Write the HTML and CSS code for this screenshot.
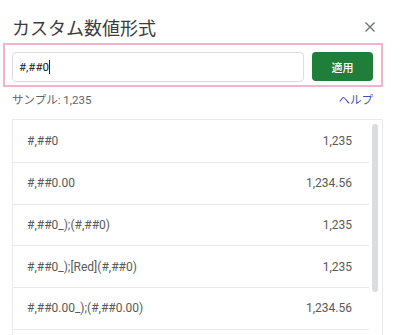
FILE: index.html
```html
<!DOCTYPE html>
<html lang="ja">
<head>
<meta charset="utf-8">
<link rel="stylesheet" href="styles.css">
</head>
<body>
<div class="dialog">
  <div class="header">
    <div class="title">カスタム数値形式</div>
    <svg class="close" width="10" height="10" viewBox="0 0 10 10"><path d="M0.5 0.5L9.5 9.5M9.5 0.5L0.5 9.5" stroke="#6b6f73" stroke-width="1.3" fill="none"/></svg>
  </div>
  <div class="highlight">
    <div class="entry">
      <div class="input"><span class="val">#,##0</span><span class="caret"></span></div>
      <div class="apply">適用</div>
    </div>
  </div>
  <div class="sample">
    <span>サンプル: 1,235</span>
    <span class="help">ヘルプ</span>
  </div>
  <div class="list">
    <div class="rows">
      <div class="row"><span>#,##0</span><span>1,235</span></div>
      <div class="row"><span>#,##0.00</span><span>1,234.56</span></div>
      <div class="row"><span>#,##0_);(#,##0)</span><span>1,235</span></div>
      <div class="row"><span>#,##0_);[Red](#,##0)</span><span>1,235</span></div>
      <div class="row"><span>#,##0.00_);(#,##0.00)</span><span>1,234.56</span></div>
      <div class="row"></div>
    </div>
    <div class="track"><div class="thumb"></div></div>
  </div>
</div>
</body>
</html>
```

FILE: styles.css
```css
html, body {
  margin: 0;
  padding: 0;
  background: #ffffff;
}
body {
  width: 400px;
  height: 335px;
  overflow: hidden;
  font-family: Roboto, "Noto Sans CJK JP", sans-serif;
}
.dialog {
  display: flex;
  flex-direction: column;
}
.header {
  display: flex;
  justify-content: space-between;
  align-items: center;
  padding: 14px 25px 0 12px;
  height: 26px;
}
.title {
  font-family: "Noto Sans CJK JP", sans-serif;
  font-size: 18px;
  line-height: 26px;
  color: #3c3c3c;
}
.close {
  display: block;
}
.highlight {
  margin: 3px 0 0 3px;
  width: 361px;
  border: 2px solid #f2b3cc;
  padding: 7px 8px 3px 7px;
}
.entry {
  display: flex;
  gap: 8px;
  height: 30px;
}
.input {
  flex: 1;
  border: 1px solid #dadce0;
  border-radius: 4px;
  display: flex;
  align-items: center;
  padding-left: 6px;
  font-size: 11.5px;
  color: #202124;
}
.caret {
  display: inline-block;
  width: 1px;
  height: 14px;
  background: #202124;
  margin-left: 0.5px;
}
.apply {
  width: 61px;
  height: 29px;
  background: #1e7e3a;
  border-radius: 4px;
  color: #ffffff;
  font-family: "Noto Sans CJK JP", sans-serif;
  font-size: 11px;
  font-weight: 500;
  display: flex;
  align-items: center;
  justify-content: center;
}
.sample {
  display: flex;
  justify-content: space-between;
  margin-top: 3px;
  padding: 0 27px 0 12px;
  height: 20px;
  line-height: 20px;
  font-size: 11.5px;
  color: #5f6368;
}
.help {
  color: #3f51b5;
  font-size: 11.5px;
}
.list {
  margin: 9px 0 0 12px;
  width: 369px;
  border: 1px solid #e8eaed;
  display: flex;
  padding-top: 1px;
}
.rows {
  flex: 1;
}
.row {
  box-sizing: border-box;
  height: 41.75px;
  border-bottom: 1px solid #e8eaed;
  display: flex;
  justify-content: space-between;
  align-items: center;
  padding: 0 17px 0 14px;
  font-size: 12px;
  color: #5a5a5a;
}
.track {
  width: 13px;
}
.thumb {
  margin: 3px 0 0 3px;
  width: 6px;
  height: 168px;
  border-radius: 3px;
  background: #dadce0;
}
```
